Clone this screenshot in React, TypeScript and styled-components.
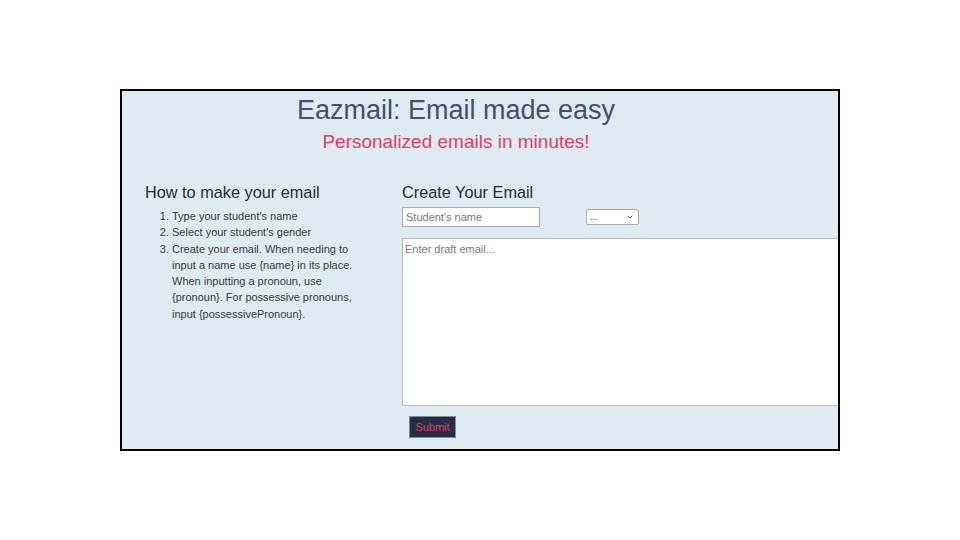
import React, { useState } from "react";
import styled, { createGlobalStyle } from "styled-components";
import { ChevronDown } from "lucide-react";

const GlobalStyle = createGlobalStyle`
  body {
    margin: 0;
    background: #ffffff;
    font-family: "Liberation Sans", Arial, sans-serif;
  }
`;

const Page = styled.div`
  display: flex;
  justify-content: center;
  padding-top: 89px;
`;

const Card = styled.div`
  width: 716px;
  height: 358px;
  border: 2px solid #000;
  background: #ddebf3;
  overflow: hidden;
  box-sizing: content-box;
`;

const Header = styled.header`
  width: 668px;
  text-align: center;
`;

const Title = styled.h1`
  margin: 0;
  padding-top: 2px;
  font-size: 27px;
  font-weight: 400;
  line-height: 34px;
  color: #45506e;
`;

const Subtitle = styled.h2`
  margin: 3px 0 0;
  font-size: 19px;
  font-weight: 400;
  line-height: 24px;
  color: #ea3a5e;
`;

const Columns = styled.div`
  display: flex;
  margin-top: 28px;
  padding-left: 23px;
`;

const HowTo = styled.section`
  width: 257px;
  flex-shrink: 0;
`;

const SectionTitle = styled.h3`
  margin: 0;
  font-size: 16.3px;
  font-weight: 400;
  line-height: 20px;
  color: #2b2b2b;
`;

const Steps = styled.ol`
  margin: 6px 0 0;
  padding-left: 27px;
  font-size: 11px;
  line-height: 16.3px;
  color: #3a3a3a;
  width: 190px;
`;

const Creator = styled.form`
  display: flex;
  flex-direction: column;
  align-items: flex-start;
  flex: 1;
  min-width: 0;
`;

const Controls = styled.div`
  display: flex;
  align-items: center;
  gap: 46px;
  margin-top: 5px;
  height: 20px;
`;

const NameInput = styled.input`
  width: 138px;
  height: 20px;
  box-sizing: border-box;
  border: 1px solid #a9a9a9;
  padding: 1px 3px;
  font-family: "Liberation Sans", Arial, sans-serif;
  font-size: 11px;
  background: #fff;
  &::placeholder {
    color: #777;
  }
`;

const SelectWrap = styled.div`
  position: relative;
  display: flex;
  width: 53px;
  height: 16px;
  color: #555;
`;

const GenderSelect = styled.select`
  appearance: none;
  display: block;
  width: 100%;
  height: 100%;
  box-sizing: border-box;
  border: 1px solid #a9a9a9;
  border-radius: 2px;
  font-family: "Liberation Sans", Arial, sans-serif;
  font-size: 9px;
  color: #333;
  background: #fff;
  padding: 0 3px;
`;

const Caret = styled(ChevronDown)`
  position: absolute;
  right: 5px;
  top: 4px;
  pointer-events: none;
`;

const Draft = styled.textarea`
  display: block;
  margin-top: 11px;
  width: 460px;
  height: 168px;
  box-sizing: border-box;
  border: 1px solid #b9b9b9;
  padding: 4px 2px;
  resize: none;
  font-family: "Liberation Sans", Arial, sans-serif;
  font-size: 11px;
  background: #fff;
  &::placeholder {
    color: #777;
  }
`;

const SubmitButton = styled.button`
  margin: 10px 0 0 7px;
  width: 47px;
  height: 22px;
  border: 1px solid #8a8a8a;
  background: #272c4a;
  color: #e8385c;
  font-family: "Liberation Sans", Arial, sans-serif;
  font-size: 11px;
  padding: 0;
  cursor: pointer;
`;

const steps = [
  "Type your student's name",
  "Select your student's gender",
  "Create your email. When needing to input a name use {name} in its place. When inputting a pronoun, use {pronoun}. For possessive pronouns, input {possessivePronoun}.",
];

const App: React.FC = () => {
  const [name, setName] = useState("");
  const [gender, setGender] = useState("");
  const [draft, setDraft] = useState("");

  return (
    <>
      <GlobalStyle />
      <Page>
        <Card>
          <Header>
            <Title>Eazmail: Email made easy</Title>
            <Subtitle>Personalized emails in minutes!</Subtitle>
          </Header>
          <Columns>
            <HowTo>
              <SectionTitle>How to make your email</SectionTitle>
              <Steps>
                {steps.map((step) => (
                  <li key={step}>{step}</li>
                ))}
              </Steps>
            </HowTo>
            <Creator onSubmit={(e) => e.preventDefault()}>
              <SectionTitle>Create Your Email</SectionTitle>
              <Controls>
                <NameInput
                  type="text"
                  placeholder="Student's name"
                  value={name}
                  onChange={(e) => setName(e.target.value)}
                />
                <SelectWrap>
                  <GenderSelect value={gender} onChange={(e) => setGender(e.target.value)}>
                    <option value="">...</option>
                    <option value="male">Male</option>
                    <option value="female">Female</option>
                    <option value="nonbinary">Non-binary</option>
                  </GenderSelect>
                  <Caret size={8} strokeWidth={3} />
                </SelectWrap>
              </Controls>
              <Draft
                placeholder="Enter draft email..."
                value={draft}
                onChange={(e) => setDraft(e.target.value)}
              />
              <SubmitButton type="submit">Submit</SubmitButton>
            </Creator>
          </Columns>
        </Card>
      </Page>
    </>
  );
};

export default App;
